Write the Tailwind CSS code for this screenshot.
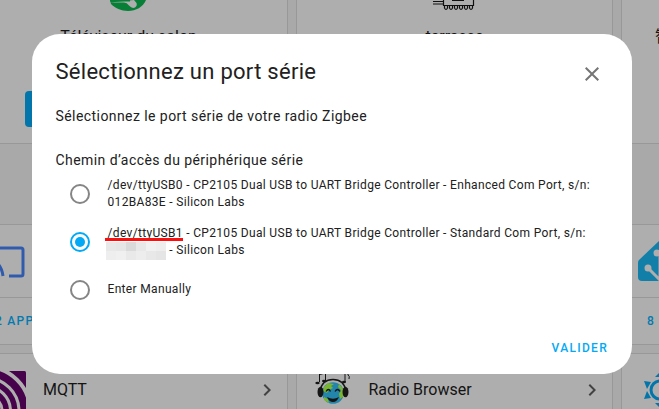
<!DOCTYPE html>
<html lang="fr">
<head>
<meta charset="utf-8">
<title>Sélectionnez un port série</title>
<script src="https://cdn.jsdelivr.net/npm/@tailwindcss/browser@4"></script>
</head>
<body class="relative h-[409px] w-[659px] overflow-hidden bg-[#a9a9a9] font-['Roboto','Noto_Sans_CJK_SC',sans-serif] text-[#141414]">
<main class="-ml-[29px] flex h-[409px] w-[967px] flex-col overflow-hidden">
  <section class="flex h-[144px] shrink-0 gap-2">
    <article class="flex w-[317px] shrink-0 flex-col items-center border-x border-b border-[#989898] bg-[#aeaeae]">
      <svg class="-ml-[4px] h-3 w-9 shrink-0" viewBox="0 0 36 12"><path d="M0 0h36C33 7 26 11 18 11C11 11 5 8 1 4z" fill="#087f37"/><path d="M0 2.500h14q3 0 5 3q3 3.500 6 2q2.500-2 1.500-4.500L24 0" fill="#aeaeae"/><path d="M0 0h20v1.500H0z" fill="#087f37"/></svg>
      <h2 class="mt-[13px] -ml-[2px] text-base leading-6">Téléviseur du salon</h2>
      <div class="mt-[42px] h-9 w-[209px] shrink-0 rounded bg-[#0276aa]"></div>
    </article>
    <article class="flex w-[317px] shrink-0 flex-col items-center border-x border-b border-[#989898] bg-[#aeaeae]">
      <svg class="-ml-[2px] h-3 w-[42px] shrink-0" viewBox="0 0 42 12" fill="none" stroke="#101010" stroke-width="1.200"><path d="M0 1.500h10M0 4h10M10.500 0v5.500h30V0M19 .500h12"/><path d="M11.500 5v3q1.500 3 3 0V5m2 0v3q1.500 3 3 0V5m2 0v3q1.500 3 3 0V5m2 0v3q1.500 3 3 0V5m2 0v3q1.500 3 3 0V5m2 0v3q1.500 3 3 0V5"/></svg>
      <h2 class="mt-[13px] text-base leading-6">terrasse</h2>
    </article>
    <article class="w-[317px] shrink-0 border-x border-b border-[#989898] bg-[#aeaeae] pt-[25px] pl-[33px]">
      <h2 class="text-base leading-6">智能插座</h2>
    </article>
  </section>
  <section class="mt-20 flex h-[121px] shrink-0 gap-2">
    <article class="w-[317px] shrink-0 border border-[#989898] bg-[#aeaeae]">
      <div class="flex h-[73px] border-b border-[#989898] pt-[18px]">
        <svg class="ml-[7px] h-[50px] w-[46px]" viewBox="0 0 46 50" fill="none" stroke="#305bad" stroke-width="3"><path d="M6 16V7q0-2 2-2h34q2 0 2 2v24q0 2-2 2H30M5 16q17 0 19 17M5 24q9 1 11 9"/></svg>
      </div>
      <p class="pt-[13px] pl-[23px] text-xs leading-5 font-medium tracking-[1.25px] text-[#027aae]">2 APPAREILS</p>
    </article>
    <article class="w-[317px] shrink-0 border border-[#989898] bg-[#aeaeae]"></article>
    <article class="w-[317px] shrink-0 border border-[#989898] bg-[#aeaeae]">
      <div class="h-[73px] border-b border-[#989898] pt-[15px] pl-[16px]">
        <svg class="h-[42px] w-[44px]" viewBox="0 0 44 42"><path d="M22 0L1 20q-1 1-1 3v14q0 4 4 4h36q4 0 4-4V23z" fill="#117fa8"/><g fill="none" stroke="#aeaeae" stroke-width="3"><path d="M22 41V13M22 40L10 28M22 36l12-12"/><circle cx="19" cy="13" r="2" fill="#aeaeae"/><circle cx="10" cy="28" r="2" fill="#aeaeae"/></g></svg>
      </div>
      <p class="pt-[13px] pl-[25px] text-xs leading-5 font-medium tracking-[1.25px] text-[#027aae]">8 APPAREILS</p>
    </article>
  </section>
  <section class="mt-2 flex h-[80px] shrink-0 gap-2">
    <article class="flex w-[317px] shrink-0 border border-[#989898] bg-[#aeaeae] pt-[17px]">
      <svg class="ml-[14px] h-10 w-10" viewBox="0 0 40 40"><rect width="40" height="40" rx="1.500" fill="#47024c"/><g fill="none" stroke="#aeaeae" stroke-width="3"><circle cx="0" cy="40" r="16"/><circle cx="0" cy="40" r="24.500"/><circle cx="0" cy="40" r="33"/><circle cx="0" cy="40" r="44" stroke-width="4"/></g></svg>
      <h3 class="ml-[17px] flex-1 pt-[7px] text-base leading-6">MQTT</h3>
      <svg class="mt-[7px] mr-2 h-6 w-6" viewBox="0 0 24 24" fill="#424242"><path d="M8.590 16.580L13.170 12 8.590 7.410 10 6l6 6-6 6z"/></svg>
    </article>
    <article class="flex w-[317px] shrink-0 border border-[#989898] bg-[#aeaeae] pt-4">
      <svg class="ml-[17px] h-[40px] w-[38px]" viewBox="0 0 38 40"><path d="M5.500 12V4l6-1v8M5 4.500l7-1.500M31 12V3l3-1v3q2 1 1 4" fill="none" stroke="#151515" stroke-width="1"/><g fill="#151515"><ellipse cx="3.500" cy="13" rx="2.200" ry="1.300"/><ellipse cx="10" cy="11" rx="2" ry="1.300"/><ellipse cx="30" cy="12" rx="2" ry="1.300"/></g><path d="M6 21Q8 9.500 19 9.500t13 11.500" fill="none" stroke="#151515" stroke-width="1.300"/><circle cx="19" cy="23" r="10.800" fill="#2385ac"/><path d="M10 17l4-4 6 1-3 2 2 2-4 2-2 3-4-2zM25 14l5 6-1 7-3 2-1-5 2-4-3-3zM10 27l4 2 1 4-5-3z" fill="#7ab52f"/><ellipse cx="6.500" cy="22" rx="3" ry="5.300" fill="#151515"/><ellipse cx="31.500" cy="22" rx="3" ry="5.300" fill="#151515"/><path d="M12 21.500q2.500-4 4.500 0m4.500 0q2.500-4 5 0" fill="none" stroke="#151515" stroke-width="1.300"/><path d="M13 27q6 3.500 12 0q-2 5-6 5t-6-5" fill="#151515"/></svg>
      <h3 class="ml-[16.500px] flex-1 pt-2 text-base leading-6">Radio Browser</h3>
      <svg class="mt-2 mr-2 h-6 w-6" viewBox="0 0 24 24" fill="#424242"><path d="M8.590 16.580L13.170 12 8.590 7.410 10 6l6 6-6 6z"/></svg>
    </article>
    <article class="flex w-[317px] shrink-0 border border-[#989898] bg-[#aeaeae] pt-4">
      <svg class="mt-[2px] ml-[20px] h-9 w-9" viewBox="0 0 36 36" fill="#0276aa"><circle cx="18" cy="18" r="9" fill="none" stroke="#0276aa" stroke-width="3"/><path d="M18 0l5 5H13zM18 36l5-5H13zM2 9l7 1-4 7zM2 27l7-1-4-7zM34 9l-7 1 4 7zM34 27l-7-1 4-7z"/></svg>
    </article>
  </section>
</main>

<div role="dialog" class="absolute top-[34px] left-8 flex h-[340px] w-[600px] flex-col rounded-[28px] bg-white px-6 text-[#212121]">
  <header class="flex h-[62px] justify-between pt-[21px]">
    <h1 class="-ml-[0.5px] pt-px text-[22px] leading-8 tracking-[0.28px] whitespace-nowrap">Sélectionnez un port série</h1>
    <svg class="mt-[7px] mr-1 h-6 w-6" viewBox="0 0 24 24" fill="#757575"><path d="M19 6.410L17.590 5 12 10.590 6.410 5 5 6.410 10.590 12 5 17.590 6.410 19 12 13.410 17.590 19 19 17.590 13.410 12z"/></svg>
  </header>
  <p class="-ml-[0.5px] pt-[10px] text-sm leading-5 tracking-[0.43px]">Sélectionnez le port série de votre radio Zigbee</p>
  <p class="-ml-[0.5px] mt-6 text-sm leading-5 tracking-[0.43px]">Chemin d’accès du périphérique série</p>
  <div class="ml-[14px] flex flex-col text-xs leading-[17px] tracking-[0.33px]">
    <label class="flex h-12 gap-[17.5px]">
      <span class="mt-[14px] h-5 w-5 shrink-0 rounded-full border-2 border-[#858585]"></span>
      <span class="pt-[7px] whitespace-nowrap">/dev/ttyUSB0 - CP2105 Dual USB to UART Bridge Controller - Enhanced Com Port, s/n:<br>012BA83E - Silicon Labs</span>
    </label>
    <label class="flex h-12 gap-[17.5px]">
      <span class="mt-[14px] flex h-5 w-5 shrink-0 items-center justify-center rounded-full border-2 border-[#03a9f4]"><span class="h-[10px] w-[10px] rounded-full bg-[#03a9f4]"></span></span>
      <span class="relative pt-[7px] whitespace-nowrap">/dev/ttyUSB1 - CP2105 Dual USB to UART Bridge Controller - Standard Com Port, s/n:<br>
        <span class="-ml-[1.5px] inline-grid h-[18px] w-[60px] grid-cols-6 grid-rows-2 align-top"><i class="bg-[#e8e8e8]"></i><i class="bg-[#e6e6e6]"></i><i class="bg-[#dadada]"></i><i class="bg-[#e8e8e8]"></i><i class="bg-[#f1f1f1]"></i><i class="bg-[#eeeeee]"></i><i class="bg-[#eeeeee]"></i><i class="bg-[#f0f0f0]"></i><i class="bg-[#e9e9e9]"></i><i class="bg-[#ededed]"></i><i class="bg-[#e8e8e8]"></i><i class="bg-[#e5e5e5]"></i></span> - Silicon Labs
        <span class="absolute top-[20px] -left-[2.5px] h-[3px] w-[78px] bg-[#fb1010]"></span></span>
    </label>
    <label class="flex h-12 gap-[17.5px]">
      <span class="mt-[14px] h-5 w-5 shrink-0 rounded-full border-2 border-[#858585]"></span>
      <span class="pt-[15px]">Enter Manually</span>
    </label>
  </div>
  <footer class="mt-[24px] flex justify-end"><button class="text-xs leading-5 font-medium tracking-[1.3px] text-[#03a9f4]">VALIDER</button></footer>
</div>
</body>
</html>
